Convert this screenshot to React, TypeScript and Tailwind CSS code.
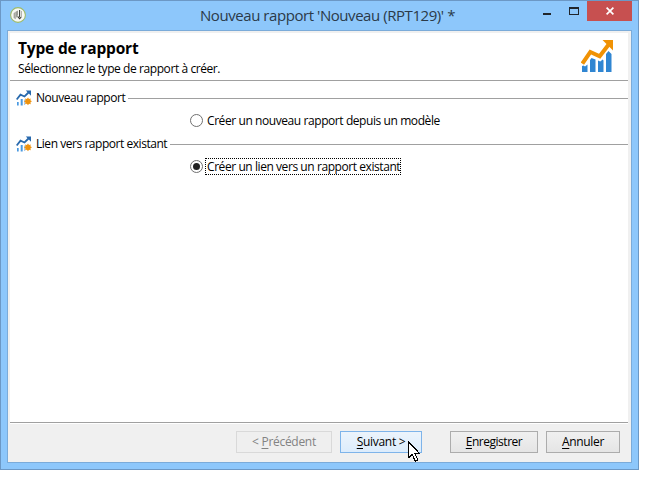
import type { ReactNode } from "react";

function AppLogo() {
  return (
    <svg className="size-4 shrink-0" viewBox="0 0 16 16">
      <circle cx="8" cy="8" r="7.4" fill="#f7f8f4" stroke="#9cba68" strokeWidth="1.1" />
      <path d="M3.6 6.200 5.800 4.600v7.600L3.600 11z" fill="#a5a69f" />
      <path d="M6.200 4.400l1.600-1v4.600l-1.600 3z" fill="#85867f" />
      <path d="M9.600 3v7.300M7.600 9.400l2 2.400 1.600-1.600" fill="none" stroke="#3a3b35" strokeWidth="1.1" />
      <path d="M11.500 4v7" stroke="#b4b6ae" strokeWidth="1" />
    </svg>
  );
}

function ChartIcon() {
  return (
    <svg className="h-8 w-8" viewBox="0 0 32 32">
      <path
        d="M1 26l1.500-.5 1.500 1L6.500 24.500V32H1zM9 20l1.500-2 4 1.500V32H9zM17 20.500l2.200 1 2.500-2 .8 1V32H17zM25 14l2.500-3 3 3V32H25z"
        fill="#3086d2"
      />
      <path d="M1.400 23.600 9.300 12 18.700 16.300 27.500 4.800" fill="none" stroke="#f09204" strokeWidth="4" />
      <path d="M21.500 0H32v10.500z" fill="#f09204" />
    </svg>
  );
}

function SectionIcon() {
  return (
    <svg className="size-4 shrink-0" viewBox="0 0 16 16">
      <path d="M.7 9.500 4.500 4.700 8.500 6.500 13 2" fill="none" stroke="#2869ad" strokeWidth="1.800" />
      <path d="M9.800.5H15v5.200l-1.700-1.800-1.800-1.600z" fill="#2869ad" />
      <path d="M1 12h1.700v3.500H1zM4.700 9h2v6.500h-2z" fill="#4b9ae2" />
      <path d="M8 9.500h1V15H8z" fill="#a8cbee" />
      <path
        d="M12 7.400l1 1.500 1.800-.4-.4 1.800 1.500 1-1.500 1.100.4 1.800-1.800-.4-1 1.500-1.100-1.500-1.800.4.4-1.800-1.500-1.100 1.500-1-.4-1.800 1.800.4z"
        fill="#ee920e"
      />
    </svg>
  );
}

function Section({ title }: { title: string }) {
  return (
    <div className="flex h-[23px] items-center pl-1.5">
      <div className="flex w-5 shrink-0 pb-px">
        <SectionIcon />
      </div>
      <span className="shrink-0 pb-0.5 tracking-[-0.460px] whitespace-nowrap">{title}</span>
      <div className="ml-[3px] h-px flex-1 bg-[#a0a0a0]" />
    </div>
  );
}

function Radio({ checked = false, children }: { checked?: boolean; children: ReactNode }) {
  return (
    <div className="flex h-[23px] items-center pb-0.5 pl-[180px]">
      <div className="flex size-[13px] shrink-0 items-center justify-center rounded-full border border-[#707070] bg-white">
        {checked && <div className="size-[7px] rounded-full bg-[#212121]" />}
      </div>
      {children}
    </div>
  );
}

function Cursor() {
  return (
    <svg className="absolute top-[9px] left-[67px] h-[21px] w-3" viewBox="0 0 12 21" shapeRendering="crispEdges">
      <path
        d="M.5.8v16l3.700-3.600 3 7 2.600-1.200-3-6.500h4.900z"
        fill="white"
        stroke="black"
        strokeWidth="1"
      />
    </svg>
  );
}

export default function App() {
  return (
    <div className="h-[499px] w-[670px] overflow-hidden bg-white font-['Open_Sans','Noto_Sans',sans-serif] text-xs text-black">
      <div className="flex h-[470px] w-[639px] flex-col border border-[#6c98c5] bg-[#8dc7fb] px-1.5 pb-1.5">
        <div className="flex h-[29px] shrink-0 items-start">
          <div className="w-[193px] pt-1.5 pl-[3px]">
            <AppLogo />
          </div>
          <h1 className="w-[322px] pt-1 text-[15px] leading-5 tracking-[-0.440px] whitespace-nowrap text-[#2b3a49]">
            Nouveau rapport 'Nouveau (RPT129)' *
          </h1>
          <div className="flex w-[65px] items-start gap-[18px] pl-[21px]">
            <div className="mt-3 h-0.5 w-2 bg-[#20252b]" />
            <div className="mt-1.5 h-2 w-2.5 border border-t-2 border-[#20252b]" />
          </div>
          <div className="flex h-5 w-[45px] items-center justify-center bg-[#c75050]">
            <svg className="h-2 w-2" viewBox="0 0 8 8">
              <path d="M.6.6l6.800 6.800M7.400.6.6 7.400" stroke="white" strokeWidth="1.700" />
            </svg>
          </div>
        </div>

        <div className="flex h-[433px] flex-col border border-[#7babd9] bg-[#f0f0f0]">
          <div className="mt-0.5 mr-[3px] ml-0.5 flex h-[391px] flex-col bg-white">
            <header className="flex h-12 shrink-0 justify-between border-b border-[#a0a0a0] pr-[15px] pl-2">
              <div>
                <h2 className="pt-[5px] text-[15.5px] leading-5 font-bold tracking-[-0.180px] whitespace-nowrap">Type de rapport</h2>
                <p className="leading-[22px] tracking-[-0.420px] whitespace-nowrap">Sélectionnez le type de rapport à créer.</p>
              </div>
              <div className="pt-[7px]">
                <ChartIcon />
              </div>
            </header>
            <main className="flex-1 pt-1.5">
              <Section title="Nouveau rapport" />
              <Radio>
                <span className="ml-1 tracking-[-0.420px] whitespace-nowrap">Créer un nouveau rapport depuis un modèle</span>
              </Radio>
              <Section title="Lien vers rapport existant" />
              <Radio checked>
                <span className="ml-0.5 flex h-[17px] w-[196px] items-center border border-dotted border-black pl-px tracking-[-0.430px] whitespace-nowrap">
                  Créer un lien vers un rapport existant
                </span>
              </Radio>
            </main>
            <div className="h-0.5 border-t border-[#a0a0a0] bg-white" />
          </div>

          <footer className="flex pt-[7px] pl-[228px] leading-5">
            <button className="h-[22px] w-24 border border-[#d9d9d9] bg-[#efefef] text-[#838383]">
              <span className="block leading-5 tracking-[-0.300px]">
                &lt; <span className="underline underline-offset-2">P</span>récédent
              </span>
            </button>
            <button className="relative ml-2 h-[22px] w-[82px] border border-[#7eb4ea] bg-linear-to-b from-[#ecf4fc] to-[#dcecfc]">
              <span className="block leading-5 tracking-[-0.300px]">
                <span className="underline underline-offset-2">S</span>uivant &gt;
              </span>
              <Cursor />
            </button>
            <button className="ml-7 h-[22px] w-[88px] border border-[#acacac] bg-linear-to-b from-[#f0f0f0] to-[#e5e5e5]">
              <span className="block leading-5 tracking-[-0.480px]">
                <span className="underline underline-offset-2">E</span>nregistrer
              </span>
            </button>
            <button className="ml-2 h-[22px] w-[74px] border border-[#acacac] bg-linear-to-b from-[#f0f0f0] to-[#e5e5e5]">
              <span className="block leading-5 tracking-[-0.350px]">
                <span className="underline underline-offset-2">A</span>nnuler
              </span>
            </button>
          </footer>
        </div>
      </div>
    </div>
  );
}
